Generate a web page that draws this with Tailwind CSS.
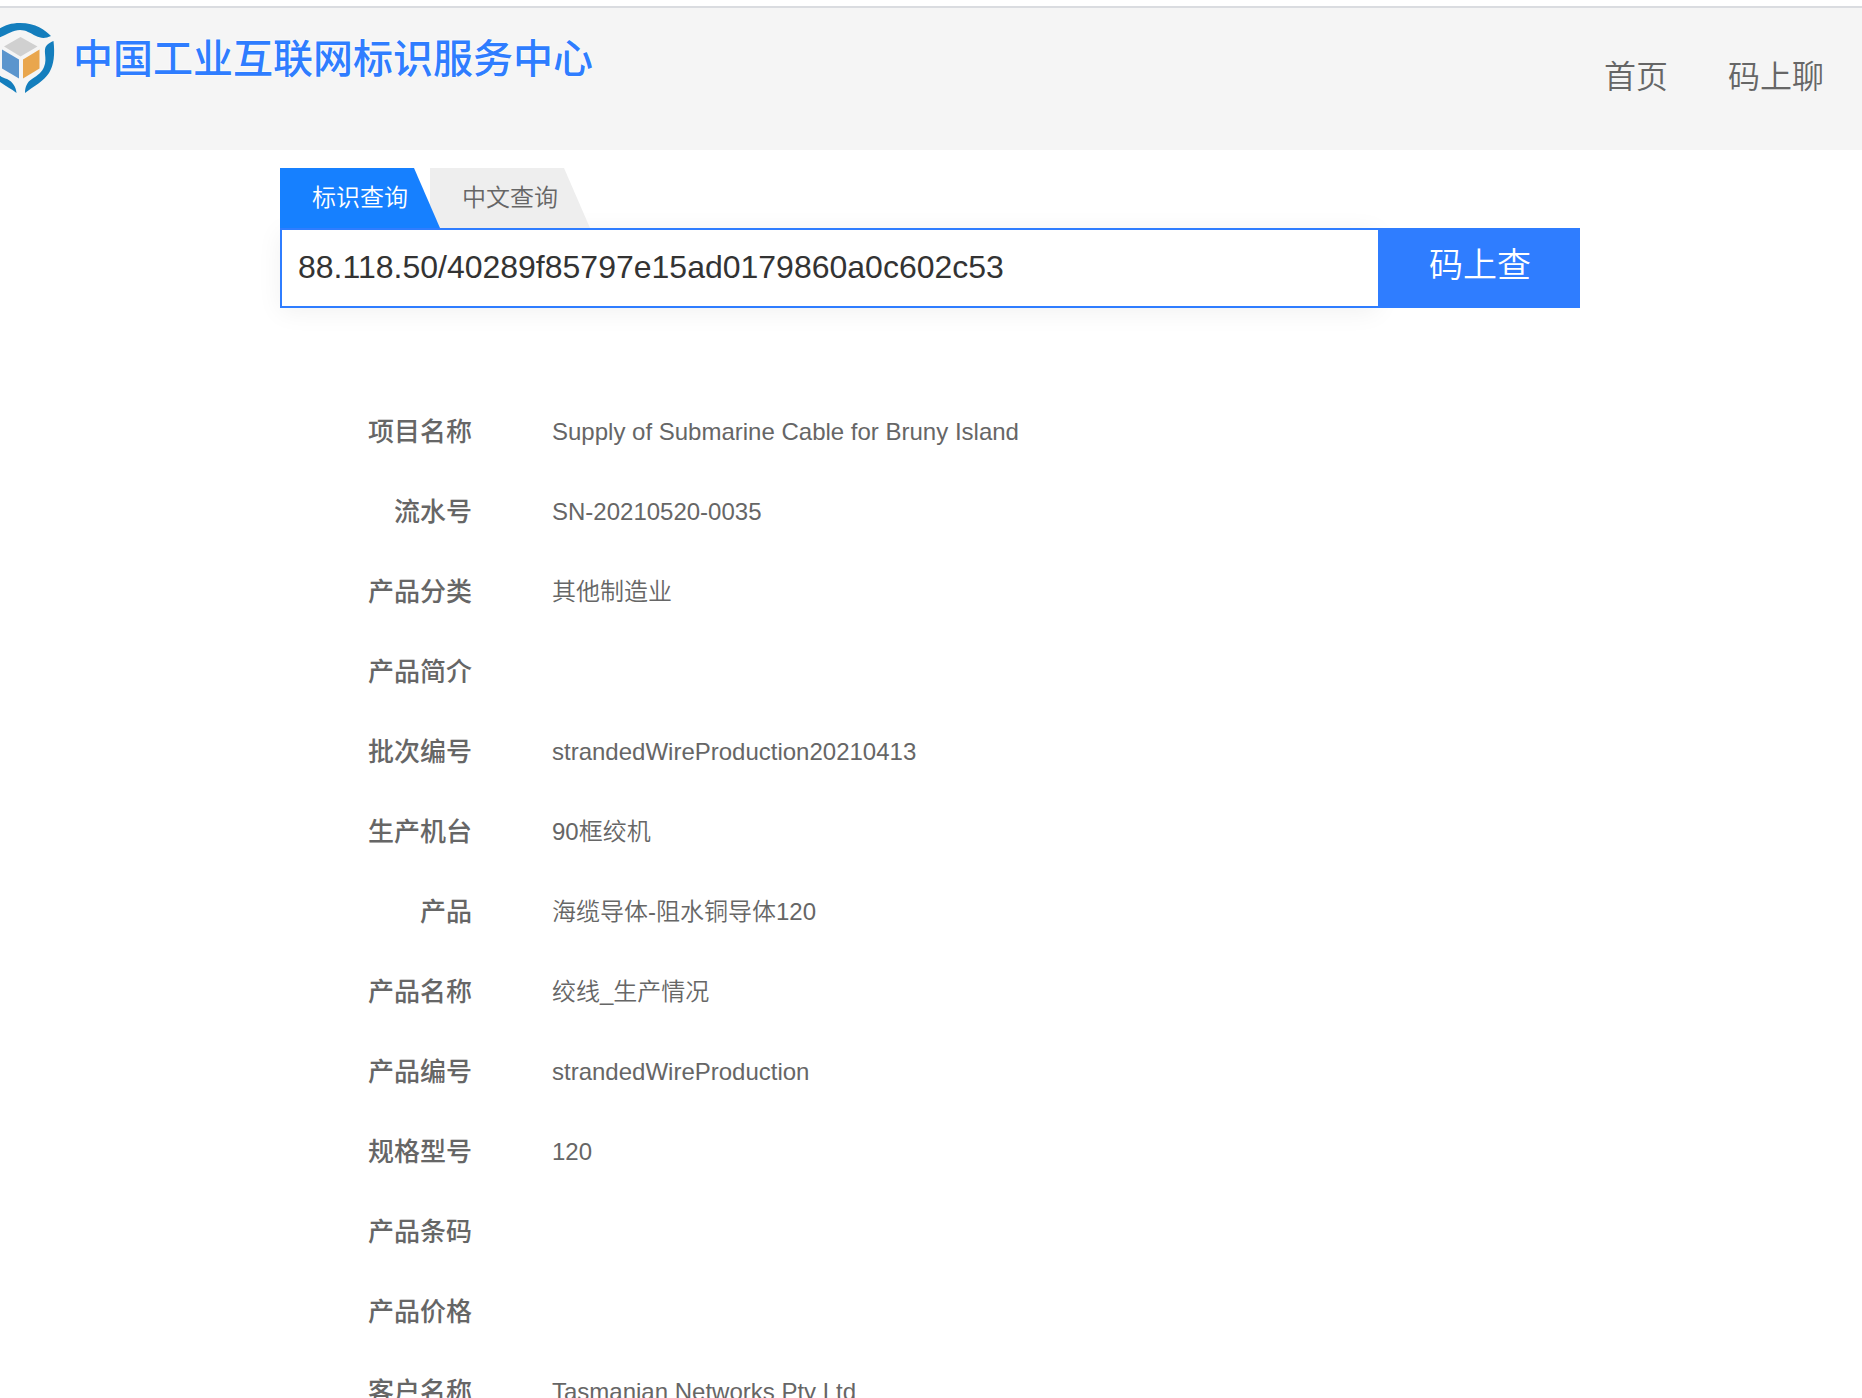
<!DOCTYPE html>
<html lang="zh-CN">
<head>
<meta charset="utf-8">
<meta name="viewport" content="width=device-width, initial-scale=1">
<title>中国工业互联网标识服务中心</title>
<script src="https://cdn.jsdelivr.net/npm/@tailwindcss/browser@4"></script>
</head>
<body class="bg-white text-[#666] font-['Liberation_Sans','Noto_Sans_CJK_SC',sans-serif]">
<header class="mt-[6px] h-36 border-t-2 border-[#dadce0] bg-[#f5f5f5] flex items-start justify-between pr-[38px]">
  <a href="#" class="flex items-start gap-[18px] pt-[14px]">
    <svg class="w-[55px] h-[72px]" viewBox="0 0 55 72" aria-hidden="true">
      <path fill="#147ebd" d="M-12 16C-3 8 4 1 20 1C36 1 45 8 51 14C45 17 40 16 36 14C30 11 26 8 20 8C10 8 5 16-12 18Z"/>
      <path fill="#147ebd" d="M53.500 19C55 32 54 43 49 51C44 59 34 64 25 71C25 65 27 60 32 57C38 53 42 50 44 45C48 36 42 28 47 23C49 21 51 20 53.500 19Z"/>
      <path fill="#147ebd" d="M-12 44L-6 48C-1 54 3 56 7 57C13 60 16 65 16.500 71C10 66 2 62-4 57Z"/>
      <path fill="#d0d0d0" d="M20.500 15L37.500 24.500L20.500 34.500L4 24.500Z"/>
      <path fill="#5b95cd" d="M2 27.500L19 37.500V56.500L2 46.500Z"/>
      <path fill="#e9a64d" d="M39.500 27.500L23 37.500V56.500L39.500 46.500Z"/>
    </svg>
    <span class="pt-2 text-[40px] leading-[58px] font-medium text-[#2f7dff] [text-shadow:0_0_2px_#fff,0_0_2px_#fff]">中国工业互联网标识服务中心</span>
  </a>
  <nav class="flex gap-[60px] pt-[45px] text-[32px] leading-[48px] font-[350]">
    <a href="#">首页</a>
    <a href="#">码上聊</a>
  </nav>
</header>
<main class="pt-[18px] pr-[2px]">
  <div class="max-w-[1300px] mx-auto">
    <div role="tablist" class="flex text-2xl leading-[60px] font-[350]">
      <button type="button" role="tab" aria-selected="true" class="z-10 w-40 h-[60px] pl-8 pb-[2px] text-left text-white bg-[#1680ff] [clip-path:polygon(0_0,134px_0,100%_100%,0_100%)]">标识查询</button>
      <button type="button" role="tab" aria-selected="false" class="-ml-[10px] w-40 h-[60px] pl-8 pb-[2px] text-left bg-[#eee] [clip-path:polygon(0_0,134px_0,100%_100%,0_100%)]">中文查询</button>
    </div>
    <form class="flex h-20">
      <input type="text" aria-label="标识" value="88.118.50/40289f85797e15ad0179860a0c602c53" class="flex-1 min-w-0 bg-white border-2 border-r-0 border-[#2f7dff] px-4 pb-[2px] text-[32px] text-[#333] shadow-[0_4px_24px_rgba(0,0,0,0.06)]">
      <button type="button" class="z-10 w-[202px] pb-[6px] pl-[2px] bg-[#2f7dff] text-white text-[34px] font-[350]">码上查</button>
    </form>
    <table class="mt-[84px] w-full">
      <tbody class="[&_tr]:h-20 [&_th]:w-[192px] [&_th]:text-right [&_th]:text-[26px] [&_th]:font-medium [&_td]:pl-20 [&_td]:text-2xl [&_td]:font-[350]">
        <tr><th scope="row">项目名称</th><td>Supply of Submarine Cable for Bruny Island</td></tr>
        <tr><th scope="row">流水号</th><td>SN-20210520-0035</td></tr>
        <tr><th scope="row">产品分类</th><td>其他制造业</td></tr>
        <tr><th scope="row">产品简介</th><td></td></tr>
        <tr><th scope="row">批次编号</th><td>strandedWireProduction20210413</td></tr>
        <tr><th scope="row">生产机台</th><td>90框绞机</td></tr>
        <tr><th scope="row">产品</th><td>海缆导体-阻水铜导体120</td></tr>
        <tr><th scope="row">产品名称</th><td>绞线_生产情况</td></tr>
        <tr><th scope="row">产品编号</th><td>strandedWireProduction</td></tr>
        <tr><th scope="row">规格型号</th><td>120</td></tr>
        <tr><th scope="row">产品条码</th><td></td></tr>
        <tr><th scope="row">产品价格</th><td></td></tr>
        <tr><th scope="row">客户名称</th><td>Tasmanian Networks Pty Ltd</td></tr>
      </tbody>
    </table>
  </div>
</main>
</body>
</html>
